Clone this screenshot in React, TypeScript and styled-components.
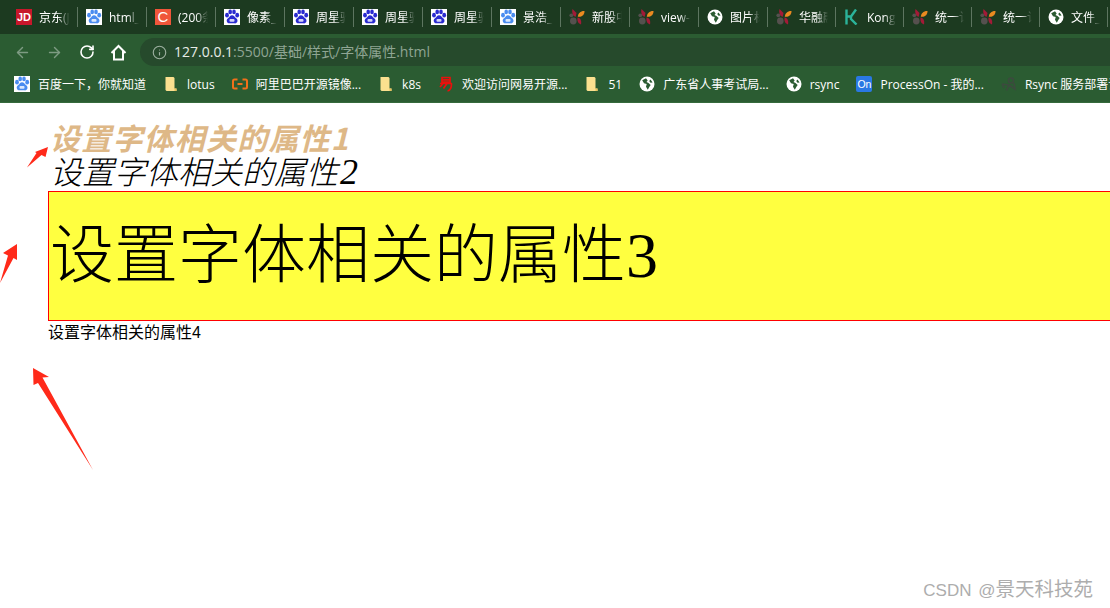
import React from "react";
import styled, { createGlobalStyle } from "styled-components";
import { ArrowLeft, ArrowRight, RotateCw, Info } from "lucide-react";

const GlobalStyle = createGlobalStyle`
  html, body { margin: 0; padding: 0; background: #fff; overflow: hidden; }
  body { width: 1110px; height: 608px; font-family: "Noto Sans CJK SC", sans-serif; }
`;

const Shell = styled.div`
  position: relative;
  width: 1110px;
  height: 608px;
  overflow: hidden;
  display: flex;
  flex-direction: column;
`;
const TabStrip = styled.div`
  height: 34px;
  display: flex;
  padding-left: 8px;
  background: #1c3a20;
  flex: none;
`;
const Tab = styled.div<{ $w: number }>`
  width: ${(p) => p.$w}px;
  flex: none;
  box-sizing: border-box;
  height: 34px;
  padding: 9px 8px 0 8px;
  display: flex;
  align-items: flex-start;
  gap: 7px;
  position: relative;
  &::after {
    content: "";
    position: absolute;
    right: 0;
    top: 7px;
    height: 20px;
    width: 1px;
    background: #5d7560;
  }
`;
const TabLabel = styled.span`
  flex: 1;
  min-width: 0;
  overflow: hidden;
  white-space: nowrap;
  font: 12px/18px "Open Sans", "Noto Sans CJK SC", sans-serif;
  color: #fff;
  -webkit-mask-image: linear-gradient(to right, #000 60%, transparent 100%);
  mask-image: linear-gradient(to right, #000 60%, transparent 100%);
`;
const Toolbar = styled.div`
  height: 32px;
  flex: none;
  display: flex;
  align-items: flex-end;
  background: #2b5c32;
  padding-left: 14px;
  box-sizing: border-box;
`;
const NavButtons = styled.div`
  display: flex;
  align-items: center;
  height: 28px;
  gap: 15px;
  margin-right: 13px;
`;
const NavButton = styled.span<{ $off?: boolean }>`
  display: flex;
  width: 17px;
  justify-content: center;
  color: ${(p) => (p.$off ? "#7e9b83" : "#ffffff")};
`;
const Omnibox = styled.div`
  flex: 1;
  height: 28px;
  background: #264a2c;
  border-radius: 14px 0 0 14px;
  display: flex;
  align-items: center;
  padding-left: 12px;
  gap: 7px;
  color: #9db0a0;
`;
const Url = styled.span`
  font: 14px/28px "Open Sans", "Noto Sans CJK SC", sans-serif;
  color: #8fa593;
  white-space: nowrap;
`;
const UrlHost = styled.span`
  color: #e6ece7;
`;
const BookmarkBar = styled.div`
  height: 37px;
  flex: none;
  box-sizing: border-box;
  display: flex;
  align-items: center;
  padding: 0 0 0 14px;
  gap: 17px;
  background: #2b5c32;
  border-bottom: 1px solid #356a3c;
  overflow: hidden;
`;
const Bookmark = styled.div`
  display: flex;
  align-items: center;
  gap: 8px;
  flex: none;
`;
const BookmarkLabel = styled.span`
  font: 12px/16px "Open Sans", "Noto Sans CJK SC", sans-serif;
  color: #fff;
  white-space: nowrap;
  padding-top: 1px;
`;
const IconBox = styled.span<{ $bg?: string }>`
  width: 16px;
  height: 16px;
  flex: none;
  display: flex;
  align-items: center;
  justify-content: center;
  background: ${(p) => p.$bg || "transparent"};
  overflow: hidden;
`;
const LogoText = styled.span<{ $size: number; $weight?: number }>`
  font: ${(p) => p.$weight || 700} ${(p) => p.$size}px/16px "Liberation Sans", sans-serif;
  color: #fff;
`;
const OnBox = styled(IconBox)`
  border-radius: 2px;
`;
const Page = styled.main`
  flex: 1;
  padding: 8px 0 0 48px;
  background: #fff;
  color: #000;
`;
const BrushTitle = styled.div`
  height: 44px;
  font: italic 700 30px/52px "Noto Sans CJK SC", sans-serif;
  letter-spacing: 1.2px;
  color: #deb887;
  white-space: nowrap;
  padding-left: 2px;
`;
const ItalicTitle = styled.div`
  height: 36px;
  font: italic 300 32px/36px "Liberation Serif", "Noto Sans CJK SC", serif;
  white-space: nowrap;
  padding-left: 2px;
`;
const ItalicDigit = styled.span`
  font-size: 36px;
  line-height: 0;
  margin-left: 2px;
`;
const YellowBox = styled.div`
  width: 1200px;
  height: 130px;
  box-sizing: border-box;
  border: 1px solid #ff0000;
  background: #ffff40;
  font: 300 64px/128px "Liberation Serif", "Noto Sans CJK SC", serif;
  padding-left: 1px;
  white-space: nowrap;
`;
const PlainLine = styled.div`
  font: 400 16px/24px "Liberation Sans", "Noto Sans CJK SC", sans-serif;
`;
const Arrows = styled.svg`
  position: absolute;
  left: 0;
  top: 0;
  pointer-events: none;
`;
const Watermark = styled.div`
  position: absolute;
  right: 17px;
  top: 577px;
  font: 400 19.500px/24px "Liberation Sans", "Noto Sans CJK SC", sans-serif;
  color: #adadad;
  white-space: nowrap;
`;
const WatermarkLatin = styled.span`
  font-size: 17px;
  word-spacing: 2px;
`;

type Kind = "jd" | "c" | "paw" | "pawDark" | "flower" | "globe" | "kong" | "folder" | "ali" | "wy" | "on" | "rsync";

const Paw = ({ color }: { color: string }) => (
  <IconBox $bg="#fff">
    <svg width="16" height="16" viewBox="0 0 16 16">
      <g fill={color}>
        <ellipse cx="3" cy="6.200" rx="1.900" ry="2.400" />
        <ellipse cx="6.200" cy="2.900" rx="1.800" ry="2.400" />
        <ellipse cx="10" cy="2.900" rx="1.800" ry="2.400" />
        <ellipse cx="13.200" cy="6.200" rx="1.900" ry="2.400" />
        <path d="M8 6.200c-1.900 0-2.400 1.900-3.700 2.800-1.300.9-1.800 1.900-1.500 3.200.3 1.500 1.500 2.300 3 2.100 1.400-.1 2.800-.3 4.400 0 1.500.3 2.800-.3 3.200-1.700.3-1.300-.1-2.600-1.500-3.500C10.700 8.200 10 6.200 8 6.200z" />
      </g>
      <rect x="5.500" y="10" width="5" height="2.800" rx="1" fill="#fff" opacity=".8" />
    </svg>
  </IconBox>
);

const Flower = () => (
  <IconBox>
    <svg width="16" height="16" viewBox="0 0 16 16">
      <path d="M3.500 0 7.500 4 6.800 7.800C4 7.300 2.500 4 3.500 0z" fill="#a31a37" />
      <path d="M15.500 2C15.700 5.500 13 8.300 8.800 7.800 9 4.500 11.500 1.800 15.500 2z" fill="#ea8a20" />
      <ellipse cx="4.300" cy="12" rx="3.300" ry="3.400" fill="#55504e" />
      <circle cx="2.300" cy="6.300" r="1.900" fill="#55504e" />
      <path d="M8.600 8.600C11.500 8.800 12.800 11.800 12 15.500 9.400 15 7.800 12 8.600 8.600z" fill="#a31a37" />
    </svg>
  </IconBox>
);

const Globe = () => (
  <IconBox>
    <svg width="16" height="16" viewBox="0 0 16 16">
      <circle cx="8" cy="8" r="7.500" fill="#fff" />
      <path d="M7 2.200 3.200 4.200 5 7.200 7.700 8 7 10.800 8.800 13.800 10.300 11 11.700 9 9.500 7 7.500 6 8.700 4.500z" fill="#2b5c32" />
      <path d="M11.500 3.500 13.600 6.500 11.500 6.700 10.200 5z" fill="#2b5c32" />
    </svg>
  </IconBox>
);

const Folder = () => (
  <IconBox>
    <svg width="16" height="16" viewBox="0 0 16 16">
      <path d="M2.500 1H10.500L11.500 2V12.500H13.500V15H3.500L2.500 14z" fill="#fbe08f" />
      <path d="M11.500 12.500h2V15h-2z" fill="#e8c25e" />
    </svg>
  </IconBox>
);

const Icon = ({ kind }: { kind: Kind }) => {
  switch (kind) {
    case "jd":
      return <IconBox $bg="#c8172b"><LogoText $size={11}>JD</LogoText></IconBox>;
    case "c":
      return <IconBox $bg="#f0563a"><LogoText $size={15} $weight={400}>C</LogoText></IconBox>;
    case "paw":
      return <Paw color="#4a8cf0" />;
    case "pawDark":
      return <Paw color="#2a2bd0" />;
    case "flower":
      return <Flower />;
    case "globe":
      return <Globe />;
    case "folder":
      return <Folder />;
    case "kong":
      return (
        <IconBox>
          <svg width="16" height="16" viewBox="0 0 16 16" fill="none" stroke="#2bb39a" strokeWidth="2.400">
            <path d="M2.500 0.500V15.500M2.500 7.500H7L12 0.500M7 7.500V10L12.500 15.500" />
          </svg>
        </IconBox>
      );
    case "ali":
      return (
        <IconBox>
          <svg width="16" height="16" viewBox="0 0 16 16" fill="none" stroke="#f0701a" strokeWidth="2">
            <path d="M5.500 3.500H2.500Q1 3.500 1 5V11Q1 12.500 2.500 12.500H5.500M10.500 3.500H13.500Q15 3.500 15 5V11Q15 12.500 13.500 12.500H10.500M5.500 8H10.500" />
          </svg>
        </IconBox>
      );
    case "wy":
      return (
        <IconBox>
          <svg width="16" height="16" viewBox="0 0 16 16" fill="none" stroke="#e8100c" strokeWidth="1.700">
            <path d="M4 1.500H12V6H4zM4 3.800H12M2 7.500H14M5 7.500 2 11M9 7.500 5.500 12.500M13.500 7.500C13.500 11 13 14.500 9.500 15" />
          </svg>
        </IconBox>
      );
    case "on":
      return <OnBox $bg="#2a78e4"><LogoText $size={10.500} $weight={400}>On</LogoText></OnBox>;
    case "rsync":
      return (
        <IconBox>
          <svg width="16" height="16" viewBox="0 0 16 16" fill="none" stroke="#3c4a3e" strokeWidth="1.600">
            <circle cx="10" cy="4.500" r="2.500" />
            <path d="M1 8 8 9 14 13 13 7M8 9 5.500 14.500M1 8 3 12" />
          </svg>
        </IconBox>
      );
  }
};

const HomeIcon = () => (
  <svg width="17" height="17" viewBox="0 0 17 17" fill="none" stroke="#fff" strokeWidth="2" strokeLinejoin="miter">
    <path d="M1.500 9 8.500 2 15.500 9M4 7V15.500H13V7" />
  </svg>
);

const tabs: { kind: Kind; label: string; w: number }[] = [
  { kind: "jd", label: "京东(JD.COM)", w: 70 },
  { kind: "paw", label: "html_百度搜索", w: 69 },
  { kind: "c", label: "(200条消息)", w: 69 },
  { kind: "pawDark", label: "像素_百度搜索", w: 69 },
  { kind: "pawDark", label: "周星驰_百度", w: 69 },
  { kind: "pawDark", label: "周星驰_百度", w: 69 },
  { kind: "pawDark", label: "周星驰_百度", w: 69 },
  { kind: "paw", label: "景浩_百度", w: 69 },
  { kind: "flower", label: "新股中心", w: 69 },
  { kind: "flower", label: "view-source", w: 69 },
  { kind: "globe", label: "图片标签", w: 69 },
  { kind: "flower", label: "华融融达", w: 68 },
  { kind: "kong", label: "Kong", w: 68 },
  { kind: "flower", label: "统一认证", w: 68 },
  { kind: "flower", label: "统一认证", w: 68 },
  { kind: "globe", label: "文件_", w: 68 },
];

const bookmarks: { kind: Kind; label: string }[] = [
  { kind: "paw", label: "百度一下，你就知道" },
  { kind: "folder", label: "lotus" },
  { kind: "ali", label: "阿里巴巴开源镜像..." },
  { kind: "folder", label: "k8s" },
  { kind: "wy", label: "欢迎访问网易开源..." },
  { kind: "folder", label: "51" },
  { kind: "globe", label: "广东省人事考试局..." },
  { kind: "globe", label: "rsync" },
  { kind: "on", label: "ProcessOn - 我的..." },
  { kind: "rsync", label: "Rsync 服务部署详解" },
];

export default function App() {
  return (
    <Shell>
      <GlobalStyle />
      <TabStrip>
        {tabs.map((t, i) => (
          <Tab key={i} $w={t.w}>
            <Icon kind={t.kind} />
            <TabLabel>{t.label}</TabLabel>
          </Tab>
        ))}
      </TabStrip>
      <Toolbar>
        <NavButtons>
          <NavButton $off><ArrowLeft size={19} strokeWidth={2} /></NavButton>
          <NavButton $off><ArrowRight size={19} strokeWidth={2} /></NavButton>
          <NavButton><RotateCw size={16} strokeWidth={2.4} /></NavButton>
          <NavButton><HomeIcon /></NavButton>
        </NavButtons>
        <Omnibox>
          <Info size={15} strokeWidth={1.800} />
          <Url><UrlHost>127.0.0.1</UrlHost>:5500/基础/样式/字体属性.html</Url>
        </Omnibox>
      </Toolbar>
      <BookmarkBar>
        {bookmarks.map((b, i) => (
          <Bookmark key={i}>
            <Icon kind={b.kind} />
            <BookmarkLabel>{b.label}</BookmarkLabel>
          </Bookmark>
        ))}
      </BookmarkBar>
      <Page>
        <BrushTitle>设置字体相关的属性1</BrushTitle>
        <ItalicTitle>设置字体相关的属性<ItalicDigit>2</ItalicDigit></ItalicTitle>
        <YellowBox>设置字体相关的属性3</YellowBox>
        <PlainLine>设置字体相关的属性4</PlainLine>
      </Page>
      <Arrows width="110" height="480" viewBox="0 0 110 480">
        <g fill="#ff2a1a">
          <polygon points="48,147 45.500,157 41.500,155 27,167.500 36.500,153 35,152" />
          <polygon points="17,244 17,260 13.500,258 0,283 8,255.500 3,253" />
          <polygon points="33,368 49,377 42.500,377.500 93,470 38,383 33.500,385" />
        </g>
      </Arrows>
      <Watermark><WatermarkLatin>CSDN @</WatermarkLatin>景天科技苑</Watermark>
    </Shell>
  );
}
